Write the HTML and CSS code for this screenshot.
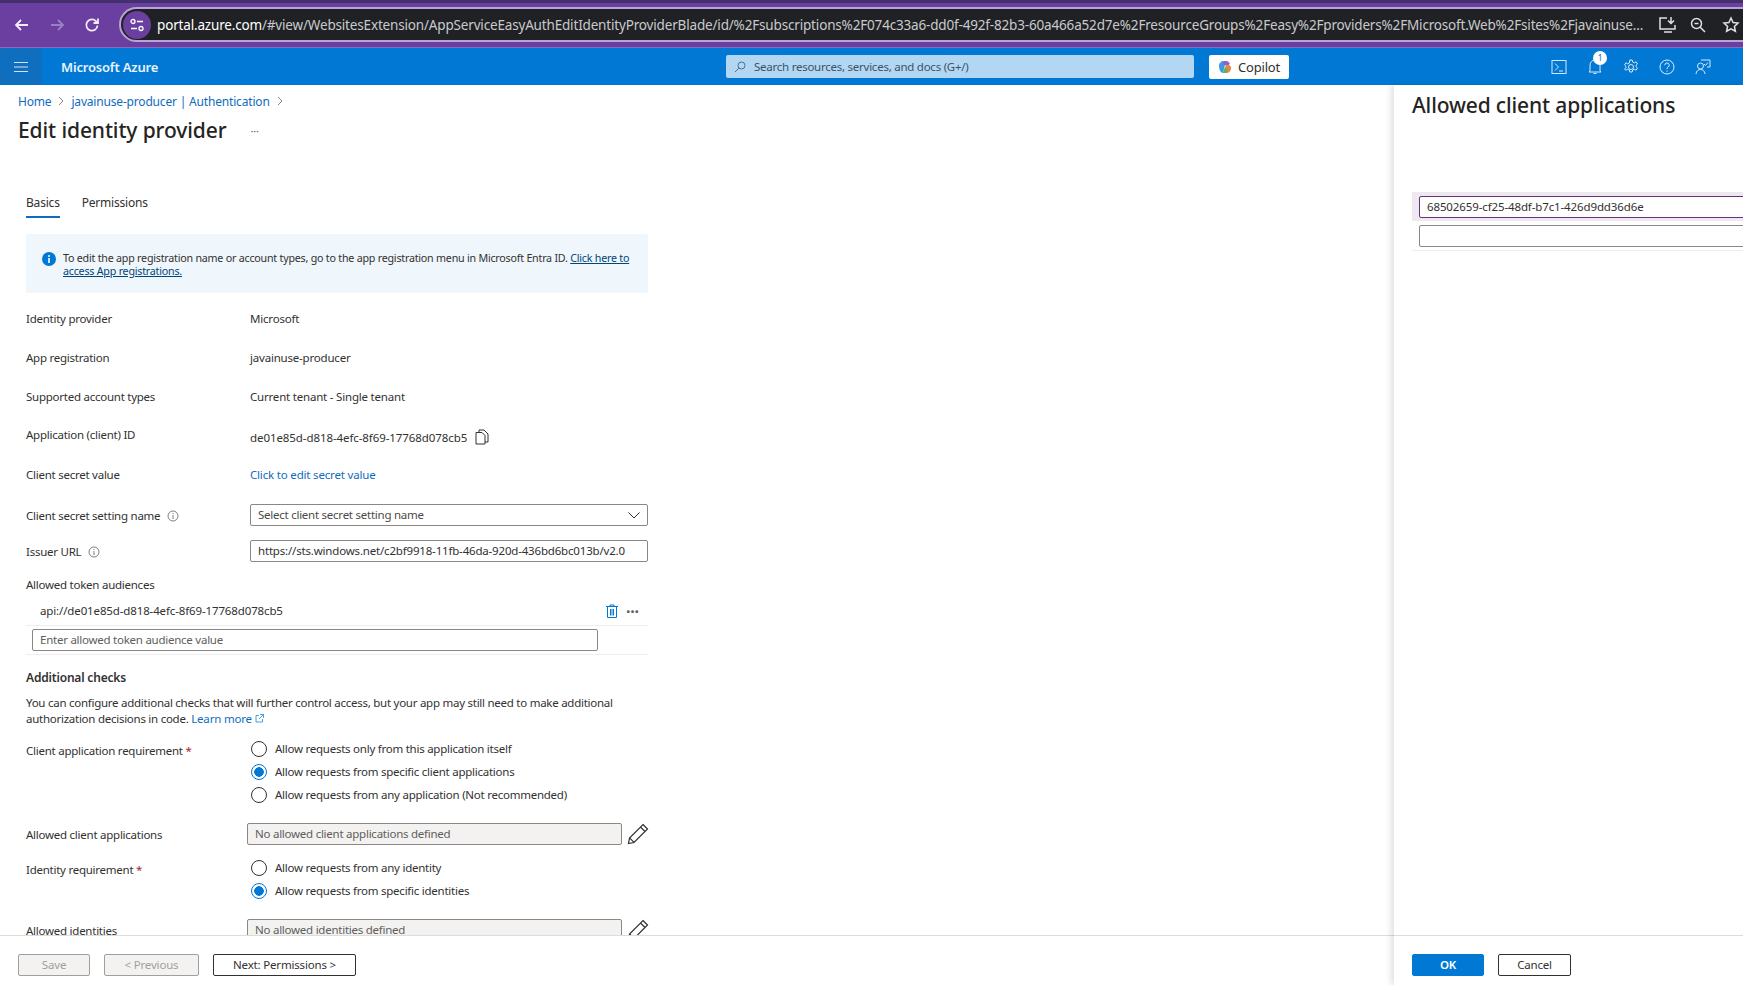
FILE: index.html
```html
<!DOCTYPE html>
<html lang="en">
<head>
<meta charset="utf-8">
<title>Edit identity provider</title>
<link rel="stylesheet" href="styles.css">
</head>
<body>
<div class="browser">
  <svg class="nav" width="20" height="20" viewBox="0 0 20 20"><path d="M16 10H4M9 5l-5 5 5 5" fill="none" stroke="#f1ecf7" stroke-width="1.8"/></svg>
  <svg class="nav" width="20" height="20" viewBox="0 0 20 20"><path d="M4 10h12M11 5l5 5-5 5" fill="none" stroke="#9a80c0" stroke-width="1.8"/></svg>
  <svg class="nav" width="20" height="20" viewBox="0 0 20 20"><path d="M15.5 10.5a5.6 5.6 0 1 1-1.6-4.4L16 8M16 3.5V8h-4.5" fill="none" stroke="#f1ecf7" stroke-width="1.8"/></svg>
  <div class="address">
    <span class="site"><svg width="16" height="14" viewBox="0 0 16 14"><circle cx="4" cy="3.5" r="2" fill="none" stroke="#fff" stroke-width="1.3"/><path d="M8 3.5h6M2 10.500h6" stroke="#fff" stroke-width="1.3"/><circle cx="12" cy="10.500" r="2" fill="none" stroke="#fff" stroke-width="1.3"/></svg></span>
    <span class="url"><span class="domain">portal.azure.com</span>/#view/WebsitesExtension/AppServiceEasyAuthEditIdentityProviderBlade/id/%2Fsubscriptions%2F074c33a6-dd0f-492f-82b3-60a466a52d7e%2FresourceGroups%2Feasy%2Fproviders%2FMicrosoft.Web%2Fsites%2Fjavainuse...</span>
    <svg class="addr-icon" width="20" height="18" viewBox="0 0 20 18"><path d="M9 2H2v11h15V9M6 16h8M13 1v6M10 4.500l3 3 3-3" fill="none" stroke="#dfe0e2" stroke-width="1.5"/></svg>
    <svg class="addr-icon zoom-icon" width="18" height="18" viewBox="0 0 18 18"><circle cx="7.500" cy="7.500" r="5" fill="none" stroke="#dfe0e2" stroke-width="1.5"/><path d="M11 11l5 5M5.500 7.500h4" stroke="#dfe0e2" stroke-width="1.5"/></svg>
    <svg class="addr-icon" width="18" height="18" viewBox="0 0 18 18"><path d="M9 2l2.100 4.500 4.900.6-3.600 3.300 1 4.800L9 12.800 4.600 15.200l1-4.800L2 7.100l4.900-.6z" fill="none" stroke="#dfe0e2" stroke-width="1.5"/></svg>
  </div>
</div>

<header class="topbar">
  <div class="menu"><svg width="14" height="12" viewBox="0 0 14 12"><path d="M0 1.500h14M0 6h14M0 10.500h14" stroke="#cfe4f7" stroke-width="1"/></svg></div>
  <div class="brand">Microsoft Azure</div>
  <div class="search">
    <svg width="12" height="12" viewBox="0 0 12 12"><circle cx="7.500" cy="4.500" r="3.500" fill="none" stroke="#4a6f8f"/><path d="M5 7l-4 4" stroke="#4a6f8f"/></svg>
    <span>Search resources, services, and docs (G+/)</span>
  </div>
  <div class="copilot">
    <svg width="14" height="14" viewBox="0 0 14 14"><path d="M1 6c0-3 2-5 5-5h2L5 13C3 13 1 10 1 6z" fill="#3c9be0"/><path d="M6 1h2c2 0 3 1 4 3L9 6 5 4z" fill="#8f5fd0"/><path d="M13 8c0 3-2 5-5 5H5l3-8c3 0 5 0 5 3z" fill="#e8873c"/><path d="M5 13l1.500-5L10 9.500 8 13z" fill="#58b368"/></svg>
    <span>Copilot</span>
  </div>
  <div class="tools">
    <svg width="16" height="16" viewBox="0 0 16 16"><rect x="1" y="1.500" width="14" height="13" fill="none" stroke="#d7e9f9"/><path d="M4 4.500L7.500 8 4 11.500M8 12h4" fill="none" stroke="#d7e9f9"/></svg>
    <span class="bell"><svg width="16" height="17" viewBox="0 0 16 17"><path d="M3 13V7a5 5 0 0 1 10 0v6l1 1H2zM6.500 15.500h3" fill="none" stroke="#d7e9f9"/></svg><span class="badge">1</span></span>
    <svg width="16" height="16" viewBox="0 0 16 16"><circle cx="8" cy="8" r="2.500" fill="none" stroke="#d7e9f9"/><path d="M6.800 1h2.400l.4 2 1.700.8 1.800-1 1.400 2.100-1.400 1.300v1.600l1.400 1.300-1.400 2.100-1.800-1-1.700.8-.4 2H6.800l-.4-2-1.700-.8-1.800 1L1.500 10.100l1.400-1.300V7.200L1.500 5.900l1.400-2.100 1.800 1 1.700-.8z" fill="none" stroke="#d7e9f9"/></svg>
    <svg width="16" height="16" viewBox="0 0 16 16"><circle cx="8" cy="8" r="7" fill="none" stroke="#e3f0fb"/><path d="M5.800 6.200a2.200 2.200 0 1 1 3.300 1.900C8.300 8.600 8 9 8 10M8 11.500v1.200" fill="none" stroke="#e3f0fb"/></svg>
    <svg width="16" height="16" viewBox="0 0 16 16"><path d="M6 1h9v7h-3M1 15c.3-3 2-4.500 4.500-4.500S9.700 12 10 15" fill="none" stroke="#d7e9f9"/><circle cx="5.500" cy="7" r="3" fill="none" stroke="#d7e9f9"/><path d="M9 5l1.500 1.500L13 3.500" fill="none" stroke="#d7e9f9"/></svg>
    <svg class="account" width="6" height="22" viewBox="0 0 6 22"><rect width="6" height="9" fill="#d7e9f9"/><rect y="13" width="6" height="9" fill="#d7e9f9"/></svg>
  </div>
</header>

<main class="workspace">
  <section class="blade">
    <div class="blade-scroll">
      <nav class="crumbs">
        <a>Home</a><svg class="sep" width="6" height="10" viewBox="0 0 6 10"><path d="M1 1l4 4-4 4" fill="none" stroke="#8a8886"/></svg>
        <a>javainuse-producer | Authentication</a><svg class="sep" width="6" height="10" viewBox="0 0 6 10"><path d="M1 1l4 4-4 4" fill="none" stroke="#8a8886"/></svg>
      </nav>
      <div class="title-row"><h1>Edit identity provider</h1><span class="title-more">···</span></div>

      <div class="form">
        <div class="tabs"><span class="tab active">Basics</span><span class="tab">Permissions</span></div>

        <div class="info">
          <svg width="14" height="14" viewBox="0 0 14 14"><circle cx="7" cy="7" r="7" fill="#0078d4"/><rect x="6.200" y="6" width="1.600" height="5" fill="#fff"/><circle cx="7" cy="3.900" r="1" fill="#fff"/></svg>
          <p>To edit the app registration name or account types, go to the app registration menu in Microsoft Entra ID. <a>Click here to access App registrations.</a></p>
        </div>

        <div class="row first"><label>Identity provider</label><span>Microsoft</span></div>
        <div class="row"><label>App registration</label><span>javainuse-producer</span></div>
        <div class="row"><label>Supported account types</label><span>Current tenant - Single tenant</span></div>
        <div class="row client-id"><label>Application (client) ID</label><span class="id-value">de01e85d-d818-4efc-8f69-17768d078cb5
          <svg width="15" height="16" viewBox="0 0 15 16"><path d="M4 3V1h5l4 4v8h-3M1 3.500h6l3 3V15H1z" fill="none" stroke="#323130"/></svg></span></div>
        <div class="row short"><label>Client secret value</label><a class="link">Click to edit secret value</a></div>

        <div class="field select-row"><label>Client secret setting name <svg class="tip" width="12" height="12" viewBox="0 0 12 12"><circle cx="6" cy="6" r="5" fill="none" stroke="#605e5c" stroke-width=".8"/><path d="M6 5v4M6 3v1" stroke="#605e5c" stroke-width=".8"/></svg></label>
          <div class="box select">Select client secret setting name<svg width="12" height="7" viewBox="0 0 12 7"><path d="M.5.5L6 6 11.500.5" fill="none" stroke="#323130"/></svg></div></div>
        <div class="field issuer-row"><label>Issuer URL <svg class="tip" width="12" height="12" viewBox="0 0 12 12"><circle cx="6" cy="6" r="5" fill="none" stroke="#605e5c" stroke-width=".8"/><path d="M6 5v4M6 3v1" stroke="#605e5c" stroke-width=".8"/></svg></label>
          <div class="box issuer">https://sts.windows.net/c2bf9918-11fb-46da-920d-436bd6bc013b/v2.0</div></div>

        <div class="aud-label">Allowed token audiences</div>
        <div class="aud-row"><span>api://de01e85d-d818-4efc-8f69-17768d078cb5</span>
          <svg width="12" height="14" viewBox="0 0 12 14"><path d="M0 2.500h12M4 2.500V1h4v1.500M1.500 2.500V13.500h9V2.500M4.500 5v6.500M6 5v6.500M7.500 5v6.500" fill="none" stroke="#0078d4"/></svg>
          <span class="dots">···</span></div>
        <div class="aud-new"><div class="box muted aud-input">Enter allowed token audience value</div></div>

        <h2>Additional checks</h2>
        <p class="desc">You can configure additional checks that will further control access, but your app may still need to make additional authorization decisions in code. <a class="link">Learn more</a> <svg width="9" height="9" viewBox="0 0 9 9"><path d="M4 1.500H1v6.500h6.500V5M5 .5h3.500V4M8.500.5L4 5" fill="none" stroke="#0078d4" stroke-width=".7"/></svg></p>

        <div class="choice client-req">
          <label>Client application requirement <b>*</b></label>
          <div class="radios">
            <div class="radio"><i class="dot"></i>Allow requests only from this application itself</div>
            <div class="radio"><i class="dot on"></i>Allow requests from specific client applications</div>
            <div class="radio"><i class="dot"></i>Allow requests from any application (Not recommended)</div>
          </div>
        </div>
        <div class="editable apps">
          <label>Allowed client applications</label>
          <div class="box disabled">No allowed client applications defined</div>
          <svg width="22" height="22" viewBox="0 0 22 22"><path d="M16 1.500l4.500 4.500L7 19.500l-5.500 1 1-5.500zM13.500 4l4.500 4.500M2.800 15.200l4 4" fill="none" stroke="#323130" stroke-width="1.200"/></svg>
        </div>
        <div class="choice identity-req">
          <label>Identity requirement <b>*</b></label>
          <div class="radios">
            <div class="radio"><i class="dot"></i>Allow requests from any identity</div>
            <div class="radio"><i class="dot on"></i>Allow requests from specific identities</div>
          </div>
        </div>
        <div class="editable identities">
          <label>Allowed identities</label>
          <div class="box disabled">No allowed identities defined</div>
          <svg width="22" height="22" viewBox="0 0 22 22"><path d="M16 1.500l4.500 4.500L7 19.500l-5.500 1 1-5.500zM13.500 4l4.500 4.500M2.800 15.200l4 4" fill="none" stroke="#323130" stroke-width="1.200"/></svg>
        </div>
      </div>
    </div>
    <footer class="actions">
      <button class="btn off save">Save</button>
      <button class="btn off prev">&lt; Previous</button>
      <button class="btn next">Next: Permissions &gt;</button>
    </footer>
  </section>

  <aside class="panel">
    <div class="panel-scroll">
      <h2 class="panel-title">Allowed client applications</h2>
      <div class="app-row selected"><div class="box focus">68502659-cf25-48df-b7c1-426d9dd36d6e</div></div>
      <div class="app-row"><div class="box"></div></div>
    </div>
    <footer class="actions panel-actions">
      <button class="btn primary">OK</button>
      <button class="btn next cancel">Cancel</button>
    </footer>
  </aside>
</main>
</body>
</html>
```

FILE: styles.css
```css
* { box-sizing: border-box; }
html, body { margin: 0; height: 985px; overflow: hidden; background: #fff; }
body { font-family: "Noto Sans", "Open Sans", sans-serif; font-size: 11.5px; letter-spacing: -.25px; color: #323130; }
h1, h2, p { margin: 0; font-weight: 400; }
label { font-weight: 400; }

.browser { height: 48px; display: flex; align-items: center; padding: 2px 0 0 12px; gap: 15px;
  background: linear-gradient(#44306f 0 3px, #6b3fa0 3px); border-bottom: 1px solid #8a6bc0; }
.nav { flex: none; }
.address { flex: 1; min-width: 0; height: 35px; margin-left: 2px; display: flex; align-items: center; gap: 13px; padding-left: 2px; padding-right: 3px;
  background: #202124; border: 2px solid #b9a2d6; border-right: 0; border-radius: 18px 0 0 18px; }
.site { width: 28px; height: 28px; flex: none; border-radius: 50%; background: #6b3fa0; display: flex; align-items: center; justify-content: center; }
.url { flex: 1; min-width: 0; margin-left: -7px; white-space: nowrap; overflow: hidden; font-size: 13.5px; color: #c9cacc; letter-spacing: -.17px; }
.domain { color: #fff; }
.addr-icon { flex: none; }
.zoom-icon { margin: 0 2px 0 -2px; }

.topbar { height: 37px; background: #0078d4; display: flex; align-items: center; color: #fff; }
.menu { width: 42px; height: 100%; flex: none; background: #106ebe; display: flex; align-items: center; justify-content: center; }
.brand { width: 665px; flex: none; margin-left: 19px; font-size: 13px; letter-spacing: -.18px; font-weight: 600; color: #e8f3fc; }
.search { width: 468px; flex: none; height: 23px; margin-right: 15px; background: #b3d7f3; color: #38536b; display: flex; align-items: center; gap: 8px; padding-left: 8px; border-radius: 2px; }
.copilot { width: 80px; flex: none; height: 24px; background: #fff; color: #323130; border-radius: 2px; display: flex; align-items: center; justify-content: center; gap: 6px; font-size: 13px; letter-spacing: -.18px; }
.tools { flex: none; display: flex; align-items: center; gap: 20px; padding-left: 262px; }
.tools svg { flex: none; }
.bell { position: relative; display: flex; }
.badge { position: absolute; top: -7px; left: 6px; width: 14px; height: 14px; border-radius: 50%; background: #fff; color: #0078d4; font-size: 9px; line-height: 14px; text-align: center; }
.account { margin-left: 13px; }

.workspace { display: flex; height: 900px; }
.blade { flex: 1; display: flex; flex-direction: column; min-width: 0; }
.blade-scroll { flex: 1; overflow: hidden; min-height: 0; padding-left: 18px; }
.actions { height: 50px; flex: none; border-top: 1px solid #dcdcdc; display: flex; align-items: center; gap: 14px; padding: 8px 0 0 18px; background: #fff; }

.crumbs { height: 16px; margin-top: 8px; display: flex; align-items: center; gap: 6px; color: #0f6cbd; font-size: 12px; letter-spacing: -.18px; }
.sep { margin: 0 1px; }
.title-row { height: 30px; margin-top: 6px; display: flex; align-items: center; gap: 24px; }
h1 { font-size: 21px; color: #252423; font-weight: 500; letter-spacing: -.1px; }
.title-more { font-size: 11px; color: #605e5c; }

.form { width: 630px; padding-left: 8px; }
.tabs { display: flex; gap: 22px; margin-top: 45px; height: 28px; font-size: 12px; letter-spacing: -.2px; }
.tab { height: 28px; line-height: 25px; }
.active { border-bottom: 2px solid #0f6cbd; }
.info { width: 622px; height: 59px; margin-top: 16px; background: #eff6fc; display: flex; gap: 7px; padding: 18px 16px 0 16px; border-radius: 2px; font-size: 10.7px; letter-spacing: -.22px; line-height: 13px; }
.info svg { flex: none; }
.info a { color: #004578; text-decoration: underline; }

.row { display: flex; height: 39px; align-items: center; }
.row.first { margin-top: 6px; }
.row.short { height: 38px; }
.row label, .field label { width: 224px; flex: none; }
.row span { letter-spacing: -.2px; }
.row span.id-value { letter-spacing: -.08px; }
.id-value { display: flex; align-items: center; gap: 8px; margin-top: 3px; }
.client-id label { margin-top: -2px; }
.link { color: #0f6cbd; letter-spacing: -.18px; }

.box { height: 22px; border: 1px solid #8a8886; border-radius: 2px; padding: 0 7px; line-height: 20px; background: #fff; white-space: nowrap; overflow: hidden; }
.field { display: flex; align-items: center; width: 622px; }
.field .box { flex: 1; }
.select-row { margin-top: 11px; }
.issuer-row { margin-top: 14px; }
.issuer { letter-spacing: -.18px; }
.tip { margin-left: 4px; vertical-align: -2px; }
.select { display: flex; justify-content: space-between; align-items: center; color: #4b4a48; padding-right: 7px; }

.aud-label { margin-top: 15px; height: 16px; line-height: 16px; }
.aud-row { width: 622px; height: 33px; display: flex; align-items: center; padding: 3px 9px 0 14px; border-bottom: 1px solid #eeeeee; gap: 8px; letter-spacing: -.13px; }
.aud-row span:first-child { flex: 1; }
.dots { font-size: 16px; font-weight: 700; line-height: 14px; color: #605e5c; }
.aud-new { width: 622px; height: 29px; padding: 3px 0 0 6px; border-bottom: 1px solid #eeeeee; }
.aud-input { width: 566px; }
.muted { color: #605e5c; }

h2 { font-size: 12px; font-weight: 600; margin-top: 13px; height: 20px; line-height: 20px; color: #323130; letter-spacing: -.18px; }
.desc { margin-top: 7px; width: 622px; line-height: 16px; letter-spacing: -.26px; }

.choice { display: flex; }
.choice > label { width: 224px; flex: none; margin-top: 6px; line-height: 16px; }
.choice b { color: #a4262c; font-weight: 400; }
.client-req { margin-top: 10px; }
.identity-req { margin-top: 11px; }
.radios { display: flex; flex-direction: column; }
.radio { height: 23px; display: flex; align-items: center; gap: 8px; padding-left: 1px; }
.dot { width: 16px; height: 16px; border: 1px solid #323130; border-radius: 50%; flex: none; background: #fff; }
.dot.on { border-color: #0078d4; background: radial-gradient(circle, #0078d4 0 4.500px, #fff 5px); }

.editable { display: flex; align-items: center; width: 624px; }
.editable label { width: 221px; flex: none; }
.editable .box { width: 375px; flex: none; }
.editable svg { margin-left: 5px; flex: none; }
.apps { margin-top: 17px; }
.identities { margin-top: 17px; }
.disabled { background: #f3f2f1; color: #605e5c; }

.btn { height: 22px; font: inherit; letter-spacing: -.18px; border: 1px solid #323130; background: #fff; color: #323130; border-radius: 2px; padding: 0; }
.off { border-color: #a19f9d; background: #f3f2f1; color: #a19f9d; }
.save { width: 72px; }
.prev { width: 95px; }
.next { width: 143px; }
.primary { width: 72px; border-color: #0078d4; background: #0078d4; color: #fff; font-weight: 600; }
.cancel { width: 73px; }

.panel { width: 349px; flex: none; display: flex; flex-direction: column; box-shadow: -3px 0 6px rgba(0, 0, 0, .12); position: relative; }
.panel-scroll { flex: 1; min-height: 0; overflow: hidden; padding-left: 18px; }
.panel-actions { padding-left: 18px; }
h2.panel-title { font-size: 21px; font-weight: 500; color: #252423; margin: 6px 0 0; height: 28px; line-height: 28px; letter-spacing: -.14px; }
.app-row { height: 29px; padding: 4px 0 0 7px; width: 340px; border-bottom: 1px solid transparent; letter-spacing: -.12px; }
.app-row .box { width: 400px; }
.selected { margin-top: 73px; background: #eee9ef; }
.selected + .app-row { border-bottom-color: #eeeeee; height: 30px; padding-top: 4px; }
.focus { border-color: #6b2f7f; }
```
